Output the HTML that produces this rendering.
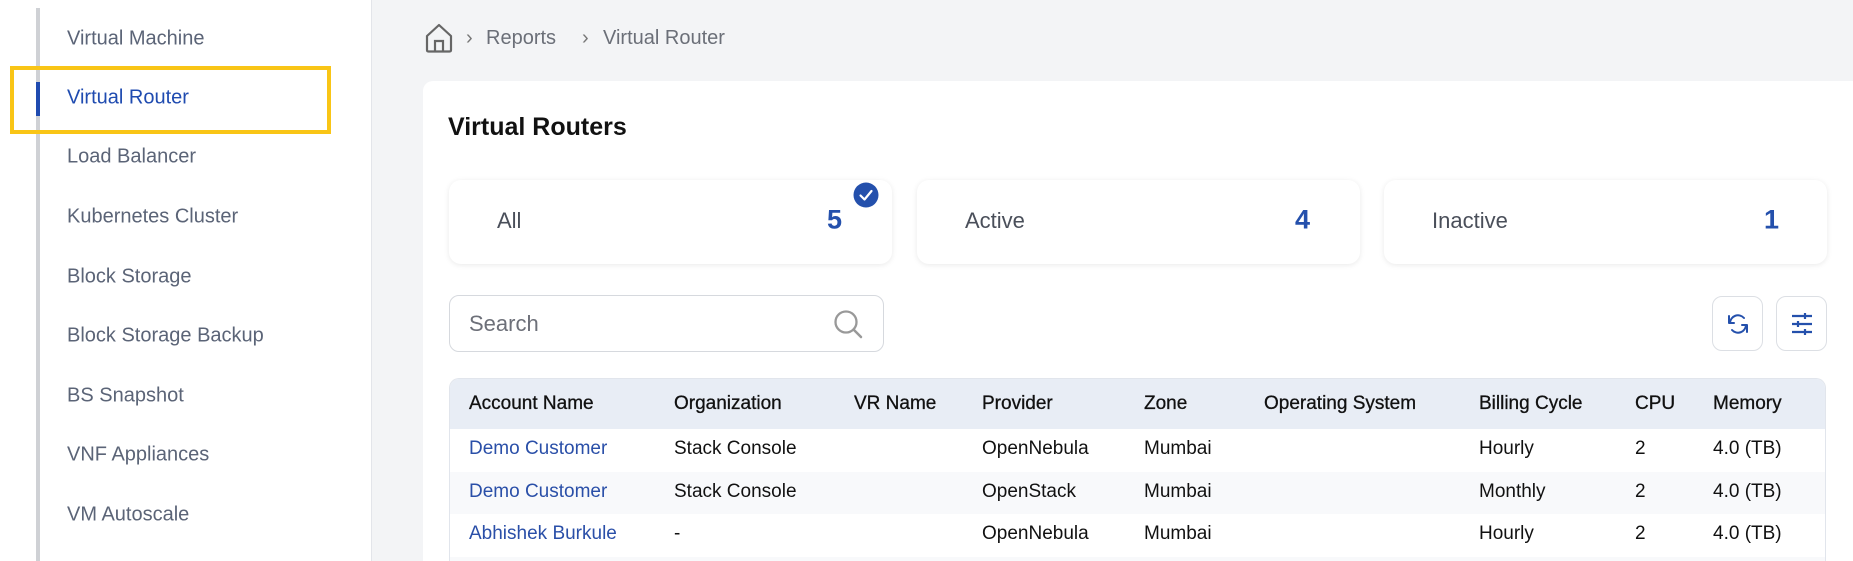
<!DOCTYPE html>
<html><head><meta charset="utf-8"><style>
*{box-sizing:border-box;margin:0;padding:0}
html,body{width:1853px;height:561px;overflow:hidden}
body{background:#f3f4f6;font-family:"Liberation Sans",sans-serif;position:relative}
.abs{position:absolute}
#side{left:0;top:0;width:372px;height:561px;background:#fff;border-right:1px solid #e3e5ea}
#rail{left:36px;top:8px;width:4px;height:553px;background:#cfd1d5}
.si{position:absolute;left:67px;font-size:20px;color:#5b6477;transform:translateY(-50%);white-space:nowrap}
#card{left:423px;top:81px;width:1430px;height:480px;background:#fff;border-radius:10px 0 0 0}
.stat{position:absolute;top:180px;width:443px;height:84px;background:#fff;border-radius:12px;box-shadow:0 1px 6px rgba(0,0,0,.09)}
.stat .l{position:absolute;left:48px;top:41px;transform:translateY(-50%);font-size:22px;color:#4a4f5a}
.stat .n{position:absolute;right:48px;top:40px;transform:translateY(-50%);font-size:27px;font-weight:bold;color:#2450ac}
.th,.td{position:absolute;font-size:19px;color:#111;transform:translateY(-50%);white-space:nowrap}
.th{top:404px;-webkit-text-stroke:0.3px #111}
.lnk{color:#2a4fa8}
.btn{position:absolute;top:296px;width:51px;height:55px;border:1px solid #dcdfe4;border-radius:10px;background:#fff}
</style></head><body>
<div id="side" class="abs"></div>
<div id="rail" class="abs"></div>
<div class="abs" style="left:36px;top:82px;width:4px;height:34px;background:#1f4bb0"></div>
<div class="abs" style="left:10px;top:66px;width:321px;height:68px;border:4px solid #f9c516"></div>
<div class="si" style="top:39px">Virtual Machine</div>
<div class="si" style="top:98px;color:#1f4bb0">Virtual Router</div>
<div class="si" style="top:157px">Load Balancer</div>
<div class="si" style="top:217px">Kubernetes Cluster</div>
<div class="si" style="top:277px">Block Storage</div>
<div class="si" style="top:336px">Block Storage Backup</div>
<div class="si" style="top:396px">BS Snapshot</div>
<div class="si" style="top:455px">VNF Appliances</div>
<div class="si" style="top:515px">VM Autoscale</div>

<svg class="abs" style="left:425px;top:23px" width="28" height="30" viewBox="0 0 28 30"><path d="M2 13 L14 2 L26 13 V27 Q26 28.5 24.5 28.5 H3.5 Q2 28.5 2 27 Z" fill="none" stroke="#666" stroke-width="2.2" stroke-linejoin="round"/><path d="M10 28.5 V18 H18 V28.5" fill="none" stroke="#666" stroke-width="2.2"/></svg>
<div class="abs" style="left:466px;top:27px;font-size:20px;color:#777">›</div>
<div class="abs" style="left:486px;top:27px;font-size:20px;color:#6b6f78">Reports</div>
<div class="abs" style="left:582px;top:27px;font-size:20px;color:#777">›</div>
<div class="abs" style="left:603px;top:27px;font-size:20px;color:#6b6f78">Virtual Router</div>

<div id="card" class="abs"></div>
<div class="abs" style="left:448px;top:113px;font-size:25px;font-weight:bold;color:#111">Virtual Routers</div>

<div class="stat" style="left:449px"><div class="l">All</div><div class="n" style="right:50px">5</div></div>
<svg class="abs" style="left:853px;top:182px" width="26" height="26"><circle cx="13" cy="13" r="12.5" fill="#2450ac"/><path d="M7.5 13.5 L11.5 17.5 L18.5 9" fill="none" stroke="#fff" stroke-width="2.2" stroke-linecap="round" stroke-linejoin="round"/></svg>
<div class="stat" style="left:917px"><div class="l">Active</div><div class="n" style="right:50px">4</div></div>
<div class="stat" style="left:1384px"><div class="l">Inactive</div><div class="n" style="right:48px">1</div></div>

<div class="abs" style="left:449px;top:295px;width:435px;height:57px;border:1px solid #d6d9de;border-radius:10px"></div>
<div class="abs" style="left:469px;top:311px;font-size:22px;color:#6d7079">Search</div>
<svg class="abs" style="left:832px;top:308px" width="34" height="34"><circle cx="14" cy="14" r="10.5" fill="none" stroke="#999" stroke-width="2.3"/><path d="M21.5 21.5 L29 29" stroke="#999" stroke-width="2.5" stroke-linecap="round"/></svg>

<div class="btn" style="left:1712px"><svg style="position:absolute;left:13px;top:15px" width="24" height="24" viewBox="0 0 24 24" fill="none" stroke="#2450ac" stroke-width="2" stroke-linecap="round" stroke-linejoin="round"><path d="M4 11 A8 8 0 0 1 18 6"/><path d="M3 4 V11 H8" /><path d="M20 13 A8 8 0 0 1 6 18"/><path d="M21 20 V13 H16"/></svg></div>
<div class="btn" style="left:1776px"><svg style="position:absolute;left:13px;top:15px" width="24" height="24" viewBox="0 0 24 24" stroke="#2450ac" stroke-width="2.2" fill="none"><path d="M2 4H22M2 12H22M2 20H22"/><path d="M15 1V7M8 9V15M15 17V23"/></svg></div>

<div class="abs" style="left:449px;top:378px;width:1377px;height:183px;border:1px solid #e1e5ec;border-bottom:none;border-radius:10px 10px 0 0;overflow:hidden">
<div style="height:50px;background:#e8edf5"></div>
<div style="height:43px;background:#fff"></div>
<div style="height:42px;background:#f8f9fb"></div>
<div style="height:43px;background:#fff"></div>
<div style="height:5px;background:#f8f9fb"></div>
</div>
<div class="th" style="left:469px">Account Name</div>
<div class="th" style="left:674px">Organization</div>
<div class="th" style="left:854px">VR Name</div>
<div class="th" style="left:982px">Provider</div>
<div class="th" style="left:1144px">Zone</div>
<div class="th" style="left:1264px">Operating System</div>
<div class="th" style="left:1479px">Billing Cycle</div>
<div class="th" style="left:1635px">CPU</div>
<div class="th" style="left:1713px">Memory</div>

<div class="td lnk" style="left:469px;top:449px">Demo Customer</div>
<div class="td" style="left:674px;top:449px">Stack Console</div>
<div class="td" style="left:982px;top:449px">OpenNebula</div>
<div class="td" style="left:1144px;top:449px">Mumbai</div>
<div class="td" style="left:1479px;top:449px">Hourly</div>
<div class="td" style="left:1635px;top:449px">2</div>
<div class="td" style="left:1713px;top:449px">4.0 (TB)</div>

<div class="td lnk" style="left:469px;top:492px">Demo Customer</div>
<div class="td" style="left:674px;top:492px">Stack Console</div>
<div class="td" style="left:982px;top:492px">OpenStack</div>
<div class="td" style="left:1144px;top:492px">Mumbai</div>
<div class="td" style="left:1479px;top:492px">Monthly</div>
<div class="td" style="left:1635px;top:492px">2</div>
<div class="td" style="left:1713px;top:492px">4.0 (TB)</div>

<div class="td lnk" style="left:469px;top:534px">Abhishek Burkule</div>
<div class="td" style="left:674px;top:534px">-</div>
<div class="td" style="left:982px;top:534px">OpenNebula</div>
<div class="td" style="left:1144px;top:534px">Mumbai</div>
<div class="td" style="left:1479px;top:534px">Hourly</div>
<div class="td" style="left:1635px;top:534px">2</div>
<div class="td" style="left:1713px;top:534px">4.0 (TB)</div>
</body></html>
